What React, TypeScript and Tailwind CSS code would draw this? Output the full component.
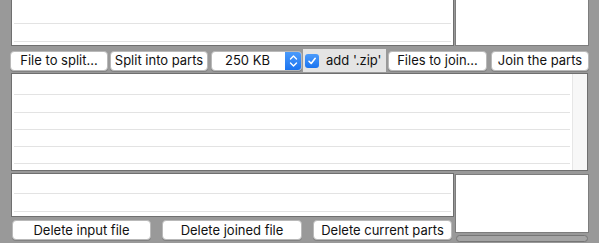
import React from 'react';

const font = { fontFamily: 'Inter, "Noto Sans", sans-serif' };

function Rows({ heights }: { heights: number[] }) {
  return (
    <>
      {heights.map((h, i) => (
        <div key={i} className="mx-[2px] border-b border-[#e3e3e3] box-border" style={{ height: h }} />
      ))}
    </>
  );
}

function Btn({ label, className = '' }: { label: string; className?: string }) {
  return (
    <button
      className={`h-[20px] rounded-[4px] bg-white border border-[#b9b9b9] shadow-[0_1px_0_rgba(0,0,0,0.15)] text-[13px] leading-none text-[#111] flex items-center justify-center ${className}`}
    >
      {label}
    </button>
  );
}

export default function App() {
  return (
    <div className="w-[599px] h-[243px] bg-[#999999] overflow-hidden select-none" style={font}>
      {/* top */}
      <div className="flex pl-[11px] h-[46px]">
        <div className="w-[443px] h-full bg-white border-x border-b border-[#6f6f6f] box-border">
          <Rows heights={[24, 18]} />
        </div>
        <div className="ml-[1px] w-[134px] h-full bg-white border-x border-b border-[#7d7d7d] box-border" />
      </div>

      {/* controls */}
      <div className="flex items-center pl-[10px] mt-[3px] h-[23px]">
        <Btn label="File to split..." className="w-[98px]" />
        <Btn label="Split into parts" className="w-[98px] ml-[2px]" />
        <div className="ml-[3px] w-[91px] h-[20px] flex rounded-[4px] bg-white border border-[#b9b9b9] shadow-[0_1px_0_rgba(0,0,0,0.15)] overflow-hidden">
          <div className="flex-1 flex items-center justify-center text-[13px] text-[#111] pr-[2px]">250 KB</div>
          <div className="w-[16px] h-full bg-gradient-to-b from-[#4b9bfb] to-[#1a74f0] flex items-center justify-center">
            <svg width="9" height="14" viewBox="0 0 9 14" fill="none" stroke="white" strokeWidth="1.4" strokeLinecap="round" strokeLinejoin="round">
              <path d="M1.5 5 L4.5 2 L7.5 5" />
              <path d="M1.5 9 L4.5 12 L7.5 9" />
            </svg>
          </div>
        </div>
        <div className="ml-[1px] w-[83px] h-[23px] bg-[#e4e4e4] flex items-center pl-[2px]">
          <div className="w-[14px] h-[14px] rounded-[3px] bg-gradient-to-b from-[#4b9bfb] to-[#1a74f0] flex items-center justify-center">
            <svg width="10" height="10" viewBox="0 0 10 10" fill="none" stroke="white" strokeWidth="1.6" strokeLinecap="round" strokeLinejoin="round">
              <path d="M2 5.3 L4.2 7.5 L8.2 2.3" />
            </svg>
          </div>
          <span className="ml-[7px] text-[13px] text-[#111]">add '.zip'</span>
        </div>
        <Btn label="Files to join..." className="w-[99px] ml-[2px]" />
        <Btn label="Join the parts" className="w-[98px] ml-[4px]" />
      </div>

      {/* middle list */}
      <div className="ml-[11px] mt-[1px] w-[577px] h-[98px] bg-white border border-[#6f6f6f] box-border flex">
        <div className="flex-1">
          <Rows heights={[21, 18, 17, 17, 17]} />
        </div>
        <div className="w-[15px] h-full bg-[#f7f7f7] border-l border-[#e6e6e6]" />
      </div>

      {/* bottom */}
      <div className="flex pl-[11px] mt-[2px]">
        <div className="w-[443px] flex flex-col">
          <div className="h-[44px] bg-white border border-[#6f6f6f] box-border">
            <Rows heights={[20, 18]} />
          </div>
          <div className="flex mt-[3px] pl-[1px]">
            <Btn label="Delete input file" className="w-[139px]" />
            <Btn label="Delete joined file" className="w-[140px] ml-[11px]" />
            <Btn label="Delete current parts" className="w-[139px] ml-[11px]" />
          </div>
        </div>
        <div className="ml-[1px] w-[134px] flex flex-col pt-[1px]">
          <div className="h-[59px] bg-white border border-[#7d7d7d] box-border" />
          <div className="mt-[2px] mx-[1px] h-[7px] rounded-full bg-[#a4a4a4] border border-[#767676] box-border" />
        </div>
      </div>
    </div>
  );
}
